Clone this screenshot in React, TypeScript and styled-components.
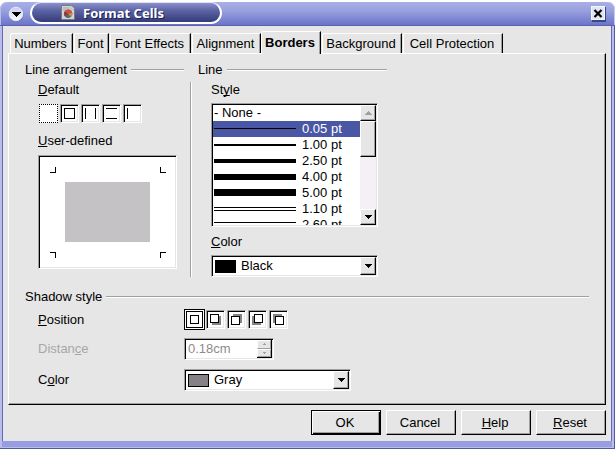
import React, { ReactNode, useState } from 'react';
import styled, { createGlobalStyle, css } from 'styled-components';

const face = '#e6e6e6';
const shade = '#a0a0a0';

const GlobalStyle = createGlobalStyle`
  * { box-sizing: border-box; }
  body { margin: 0; background: #fff; }
  body, button, input, select {
    font-family: "Liberation Sans", Arial, sans-serif;
    font-size: 13px;
    line-height: 16px;
    color: #000;
  }
  button { padding: 0; margin: 0; border-radius: 0; }
  svg { display: block; flex: none; }
  u { text-underline-offset: 1px; text-decoration-thickness: 1px; text-decoration-skip-ink: none; }
`;

const sunken = css`
  border: 1px solid;
  border-color: ${shade} #fff #fff ${shade};
  box-shadow: inset 1px 1px 0 #000, inset -1px -1px 0 ${face};
`;

const raised = css`
  background: ${face};
  border: 1px solid;
  border-color: #fff #000 #000 #fff;
  box-shadow: inset -1px -1px 0 ${shade};
`;

const Window = styled.div`
  min-height: 100vh;
  padding-top: 2px;
  display: flex;
  flex-direction: column;
`;

const TitleBar = styled.header`
  height: 24px;
  flex: none;
  display: flex;
  align-items: center;
  padding: 0 9px 0 8px;
  border-radius: 7px 7px 0 0;
  border-bottom: 1px solid #5960ae;
  background: linear-gradient(#a9afe6, #989fdf 40%, #6b74c9);
  box-shadow: inset 1px 0 0 #b9bdec, inset -1px 0 0 #c5c9f3;
`;

const TitleButton = styled.button`
  border: 0;
  background: none;
`;

const TitlePill = styled.div`
  align-self: stretch;
  width: 192px;
  margin: 0 auto 1px 6px;
  padding-left: 29px;
  display: flex;
  align-items: center;
  gap: 8px;
  border: 2px solid #fff;
  border-top: 1px solid #dfe1fa;
  border-radius: 12px;
  background: linear-gradient(#8a91cb, #5b63a4 40%, #343b79);
`;

const Title = styled.h1`
  margin: 0;
  font: bold 13px/18px "Noto Sans", sans-serif;
  color: #fff;
  text-shadow: 1px 1px 0 #1c2050;
`;

const Frame = styled.div`
  flex: 1;
  display: flex;
  padding: 0 1px 1px 0;
  background: #525a9c;
`;

const FrameEdge = styled.div`
  flex: 1;
  min-width: 0;
  display: flex;
  border: solid #b8bdec;
  border-width: 0 2px 1px 2px;
  background: linear-gradient(#8289d2, #979de0);
  padding-bottom: 6px;
`;

const Dialog = styled.main`
  flex: 1;
  min-width: 0;
  display: flex;
  flex-direction: column;
  padding: 5px;
  background: ${face};
  border: solid #6169b8;
  border-width: 0 1px;
`;

const TabBar = styled.div`
  display: flex;
  align-items: flex-end;
  gap: 1px;
  padding-left: 2px;
`;

const Tab = styled.button<{ $width: number; $active: boolean }>`
  ${raised}
  width: ${p => p.$width}px;
  height: 20px;
  padding: 1px 2px 0 0;
  border-bottom: 0;
  border-radius: 2px 0 0 0;
  box-shadow: inset -1px 0 0 ${shade};
  white-space: nowrap;
  ${p => p.$active && css`
    height: 23px;
    margin: 0 0 -1px -1px;
    padding-bottom: 2px;
    position: relative;
    font-weight: bold;
  `}
`;

const Panel = styled.section`
  ${raised}
  padding: 8px 16px 13px 15px;
`;

const Columns = styled.div`
  display: grid;
  grid-template-columns: 160px 1px 190px;
  column-gap: 6px;
  margin-bottom: 12px;
`;

const Group = styled.div`
  display: flex;
  flex-direction: column;
`;

const GroupTitle = styled.h2`
  margin: 0 0 4px;
  padding-left: 1px;
  display: flex;
  align-items: center;
  gap: 4px;
  font-size: 13px;
  font-weight: normal;
  &::after {
    content: "";
    flex: 1;
    height: 2px;
    background: linear-gradient(${shade} 50%, #fff 50%);
  }
`;

const Divider = styled.div`
  margin-top: 20px;
  background: ${shade};
  box-shadow: 1px 0 0 #fff;
`;

const Fields = styled.div<{ $gap: number }>`
  margin-left: 14px;
  display: flex;
  flex-direction: column;
  gap: ${p => p.$gap}px;
`;

const Field = styled.div<{ $gap?: number }>`
  display: flex;
  flex-direction: column;
  gap: ${p => p.$gap ?? 5}px;
`;

const ChoiceRow = styled.div`
  display: flex;
  gap: 2px;
  padding: 0 1px;
`;

const Choice = styled.button<{ $look?: 'dotted' | 'framed' }>`
  width: 19px;
  height: 19px;
  display: grid;
  place-content: center;
  background: #fff;
  ${sunken}
  ${p => p.$look === 'dotted' && css`
    border: 1px dotted #000;
    box-shadow: none;
  `}
  ${p => p.$look === 'framed' && css`
    border: 1px solid #fff;
    box-shadow: 0 0 0 1px #000, inset 0 0 0 1px #000;
  `}
`;

const Preview = styled.div`
  ${sunken}
  width: 139px;
  height: 114px;
  display: grid;
  place-content: center;
  background: #fff;
`;

const ListFrame = styled.div`
  ${sunken}
  width: 167px;
  height: 124px;
  padding: 1px;
  display: flex;
  background: #fff;
`;

const List = styled.ul`
  flex: 1;
  margin: 0;
  padding: 0;
  list-style: none;
  overflow: hidden;
`;

const ListItem = styled.li<{ $selected: boolean }>`
  height: 16px;
  padding-left: 1px;
  display: flex;
  align-items: center;
  gap: 6px;
  white-space: nowrap;
  ${p => p.$selected && css`
    background: #4a57a4;
    color: #fff;
  `}
`;

const Scrollbar = styled.div`
  width: 16px;
  display: flex;
  flex-direction: column;
  background: #f5f0f5;
`;

const ArrowButton = styled.button`
  ${raised}
  height: 16px;
  display: grid;
  place-content: center;
`;

const Thumb = styled.div`
  ${raised}
  height: 36px;
  margin-bottom: auto;
`;

const Combo = styled.div`
  ${sunken}
  position: relative;
  width: 167px;
  height: 22px;
  padding: 1px;
  background: #fff;
`;

const ComboSelect = styled.select`
  appearance: none;
  display: block;
  width: 100%;
  height: 18px;
  padding: 0 18px 0 28px;
  border: 0;
  outline: 0;
  background: transparent;
`;

const Swatch = styled.span<{ $color: string }>`
  position: absolute;
  left: 3px;
  top: 4px;
  width: 21px;
  height: 13px;
  border: 1px solid #000;
  background: ${p => p.$color};
  pointer-events: none;
`;

const ComboArrow = styled.span`
  ${raised}
  position: absolute;
  right: 1px;
  top: 1px;
  bottom: 1px;
  width: 16px;
  display: grid;
  place-content: center;
  pointer-events: none;
`;

const ShadowGrid = styled.div`
  margin-left: 14px;
  padding-top: 1px;
  display: grid;
  grid-template-columns: 146px 1fr;
  row-gap: 9px;
  align-items: center;
`;

const Label = styled.label<{ $disabled?: boolean }>`
  color: ${p => (p.$disabled ? '#a6a6a6' : '#000')};
`;

const Spin = styled.div`
  ${sunken}
  width: 90px;
  height: 22px;
  padding: 1px;
  display: flex;
  background: #fff;
`;

const SpinInput = styled.input`
  flex: 1;
  min-width: 0;
  padding: 0 2px;
  border: 0;
  background: transparent;
  color: #8c8c8c;
`;

const SpinButtons = styled.div`
  width: 15px;
  display: grid;
  grid-template-rows: 1fr 1fr;
  border: solid #000;
  border-width: 0 1px 1px 0;
`;

const SpinButton = styled.button`
  ${raised}
  display: grid;
  place-content: center;
  border-color: #fff ${shade} ${shade} #fff;
  box-shadow: none;
`;

const Actions = styled.footer`
  display: flex;
  justify-content: flex-end;
  gap: 5px;
  margin-top: 5px;
`;

const ActionButton = styled.button<{ $primary?: boolean }>`
  ${raised}
  width: 70px;
  height: 25px;
  padding-right: 2px;
  ${p => p.$primary && css`
    border-color: #000;
    box-shadow: inset 1px 1px 0 #fff, inset -1px -1px 0 #000, inset -2px -2px 0 ${shade};
  `}
`;

const Arrow = ({ up = false, color = '#000', size = 7 }: { up?: boolean; color?: string; size?: number }) => {
  const h = (size + 1) / 2;
  return (
    <svg width={size} height={h} shapeRendering="crispEdges" aria-hidden="true">
      <path d={up ? `M0 ${h}H${size}L${size / 2} 0Z` : `M0 0H${size}L${size / 2} ${h}Z`} fill={color} />
    </svg>
  );
};

const MenuIcon = () => (
  <svg width="16" height="16" viewBox="0 0 16 16">
    <defs>
      <linearGradient id="orb" x1="0" y1="0" x2="0" y2="1">
        <stop offset="0" stopColor="#c3cdea" />
        <stop offset="1" stopColor="#ffffff" />
      </linearGradient>
    </defs>
    <circle cx="8.4" cy="8.6" r="7" fill="#46508f" />
    <circle cx="8" cy="8" r="6.8" fill="url(#orb)" stroke="#e8edfa" />
    <path d="M3 6H13L8 11Z" fill="#000" shapeRendering="crispEdges" />
  </svg>
);

const DocumentIcon = () => (
  <svg width="14" height="15" viewBox="0 0 14 15">
    <path d="M.5.5H10L13.5 4V14.5H.5Z" fill="#d4d4d4" stroke="#77777d" />
    <path d="M10 .5V4H13.5Z" fill="#fff" stroke="#8a8a8a" strokeWidth=".6" />
    <path d="M2 3H8M2 5H5" stroke="#a5a5a5" />
    <circle cx="7.2" cy="8.7" r="4.2" fill="#4a6d78" />
    <path d="M7.2 8.7L3.6 6.5A4.2 4.2 0 0 1 11.2 7.4Z" fill="#d0503c" />
    <path d="M7.2 8.7L11.2 7.4A4.2 4.2 0 0 1 9.8 12Z" fill="#d98650" />
    <path d="M7.2 8.7L3.6 6.5A4.2 4.2 0 0 0 4.4 11.8Z" fill="#913c3c" />
  </svg>
);

const CloseIcon = () => (
  <svg width="15" height="16" viewBox="0 0 15 16">
    <path d="M1 1H15V16H1Z" fill="#3d4684" />
    <path d="M0 0H14V14H0Z" fill="#f4f6fc" />
    <path d="M1 1H13V13H1Z" fill="#dfe5f3" />
    <path d="M3.5 4L10.5 11M10.5 4L3.5 11" stroke="#000" strokeWidth="2.2" />
  </svg>
);

const Glyph = ({ children }: { children?: ReactNode }) => (
  <svg width="19" height="19" viewBox="0 0 19 19" shapeRendering="crispEdges" fill="none" stroke="#000">
    {children}
  </svg>
);

const borderPresets: { name: string; path: string }[] = [
  { name: 'No borders', path: '' },
  { name: 'Box', path: 'M4.5 4.5H14.5V14.5H4.5Z' },
  { name: 'Left and right', path: 'M4.5 4V15M14.5 4V15' },
  { name: 'Top and bottom', path: 'M4 4.5H15M4 14.5H15' },
  { name: 'Left only', path: 'M4.5 4V15' },
];

const shadowPresets = [
  { name: 'No shadow', x: 5, y: 5, sx: 5, sy: 5 },
  { name: 'Bottom right', x: 4, y: 4, sx: 6, sy: 6 },
  { name: 'Top right', x: 4, y: 6, sx: 6, sy: 4 },
  { name: 'Bottom left', x: 6, y: 4, sx: 4, sy: 6 },
  { name: 'Top left', x: 6, y: 6, sx: 4, sy: 4 },
];

const tabs = [
  { name: 'Numbers', width: 63 },
  { name: 'Font', width: 35 },
  { name: 'Font Effects', width: 81 },
  { name: 'Alignment', width: 69 },
  { name: 'Borders', width: 60 },
  { name: 'Background', width: 80 },
  { name: 'Cell Protection', width: 100 },
];

/* Each stroke is [top, thickness] inside a 16px row. */
const lineStyles: { name: string; strokes: [number, number][] }[] = [
  { name: '- None -', strokes: [] },
  { name: '0.05 pt', strokes: [[7, 1]] },
  { name: '1.00 pt', strokes: [[7, 2]] },
  { name: '2.50 pt', strokes: [[6, 4]] },
  { name: '4.00 pt', strokes: [[5, 6]] },
  { name: '5.00 pt', strokes: [[4, 7]] },
  { name: '1.10 pt', strokes: [[6, 1], [9, 1]] },
  { name: '2.60 pt', strokes: [[5, 1], [9, 2]] },
];

const ColorCombo = ({ id, name, color }: { id: string; name: string; color: string }) => (
  <Combo>
    <ComboSelect id={id} defaultValue={name}>
      <option>{name}</option>
    </ComboSelect>
    <Swatch $color={color} />
    <ComboArrow><Arrow /></ComboArrow>
  </Combo>
);

export default function App() {
  const [tab, setTab] = useState('Borders');
  const [line, setLine] = useState('0.05 pt');
  const [shadow, setShadow] = useState('No shadow');

  return (
    <Window>
      <GlobalStyle />
      <TitleBar>
        <TitleButton aria-label="Window menu"><MenuIcon /></TitleButton>
        <TitlePill>
          <DocumentIcon />
          <Title>Format Cells</Title>
        </TitlePill>
        <TitleButton aria-label="Close"><CloseIcon /></TitleButton>
      </TitleBar>
      <Frame>
        <FrameEdge>
          <Dialog>
            <TabBar role="tablist">
              {tabs.map(t => (
                <Tab
                  key={t.name}
                  role="tab"
                  aria-selected={t.name === tab}
                  $width={t.width}
                  $active={t.name === tab}
                  onClick={() => setTab(t.name)}
                >
                  {t.name}
                </Tab>
              ))}
            </TabBar>
            <Panel role="tabpanel">
              <Columns>
                <Group>
                  <GroupTitle>Line arrangement</GroupTitle>
                  <Fields $gap={10}>
                    <Field $gap={6}>
                      <span id="default-label"><u>D</u>efault</span>
                      <ChoiceRow role="group" aria-labelledby="default-label">
                        {borderPresets.map((p, i) => (
                          <Choice key={p.name} aria-label={p.name} $look={i === 0 ? 'dotted' : undefined}>
                            <Glyph><path d={p.path} /></Glyph>
                          </Choice>
                        ))}
                      </ChoiceRow>
                    </Field>
                    <Field $gap={6}>
                      <span id="preview-label"><u>U</u>ser-defined</span>
                      <Preview role="img" aria-labelledby="preview-label">
                        <svg width="117" height="92" shapeRendering="crispEdges">
                          <rect x="16" y="16" width="85" height="60" fill="#c5c2c5" />
                          <path
                            d="M1 6.5H6.5V1M111.5 1V6.5H117M1 86.5H6.5V92M117 86.5H111.5V92"
                            fill="none"
                            stroke="#000"
                          />
                        </svg>
                      </Preview>
                    </Field>
                  </Fields>
                </Group>
                <Divider />
                <Group>
                  <GroupTitle>Line</GroupTitle>
                  <Fields $gap={7}>
                    <Field>
                      <span id="style-label">St<u>y</u>le</span>
                      <ListFrame>
                        <List role="listbox" aria-labelledby="style-label">
                          {lineStyles.map(s => (
                            <ListItem
                              key={s.name}
                              role="option"
                              aria-selected={s.name === line}
                              $selected={s.name === line}
                              onClick={() => setLine(s.name)}
                            >
                              {s.strokes.length > 0 && (
                                <svg width="82" height="16" shapeRendering="crispEdges">
                                  {s.strokes.map(([y, h]) => <rect key={y} y={y} width="82" height={h} />)}
                                </svg>
                              )}
                              {s.name}
                            </ListItem>
                          ))}
                        </List>
                        <Scrollbar>
                          <ArrowButton aria-label="Scroll up"><Arrow up color={shade} /></ArrowButton>
                          <Thumb />
                          <ArrowButton aria-label="Scroll down"><Arrow /></ArrowButton>
                        </Scrollbar>
                      </ListFrame>
                    </Field>
                    <Field>
                      <Label htmlFor="line-color"><u>C</u>olor</Label>
                      <ColorCombo id="line-color" name="Black" color="#000" />
                    </Field>
                  </Fields>
                </Group>
              </Columns>
              <GroupTitle>Shadow style</GroupTitle>
              <ShadowGrid>
                <span id="position-label"><u>P</u>osition</span>
                <ChoiceRow role="group" aria-labelledby="position-label">
                  {shadowPresets.map(s => (
                    <Choice
                      key={s.name}
                      aria-label={s.name}
                      aria-pressed={s.name === shadow}
                      $look={s.name === shadow ? 'framed' : undefined}
                      onClick={() => setShadow(s.name)}
                    >
                      <Glyph>
                        <rect x={s.sx} y={s.sy} width="9" height="9" fill="#858285" stroke="none" />
                        <rect x={s.x + 0.5} y={s.y + 0.5} width="8" height="8" fill="#fff" />
                      </Glyph>
                    </Choice>
                  ))}
                </ChoiceRow>
                <Label htmlFor="distance" $disabled>Distan<u>c</u>e</Label>
                <Spin>
                  <SpinInput id="distance" defaultValue="0.18cm" disabled />
                  <SpinButtons>
                    <SpinButton aria-label="Increase distance" disabled><Arrow up size={3} color={shade} /></SpinButton>
                    <SpinButton aria-label="Decrease distance" disabled><Arrow size={3} color={shade} /></SpinButton>
                  </SpinButtons>
                </Spin>
                <Label htmlFor="shadow-color">C<u>o</u>lor</Label>
                <ColorCombo id="shadow-color" name="Gray" color="#858285" />
              </ShadowGrid>
            </Panel>
            <Actions>
              <ActionButton $primary>OK</ActionButton>
              <ActionButton>Cancel</ActionButton>
              <ActionButton><u>H</u>elp</ActionButton>
              <ActionButton><u>R</u>eset</ActionButton>
            </Actions>
          </Dialog>
        </FrameEdge>
      </Frame>
    </Window>
  );
}
